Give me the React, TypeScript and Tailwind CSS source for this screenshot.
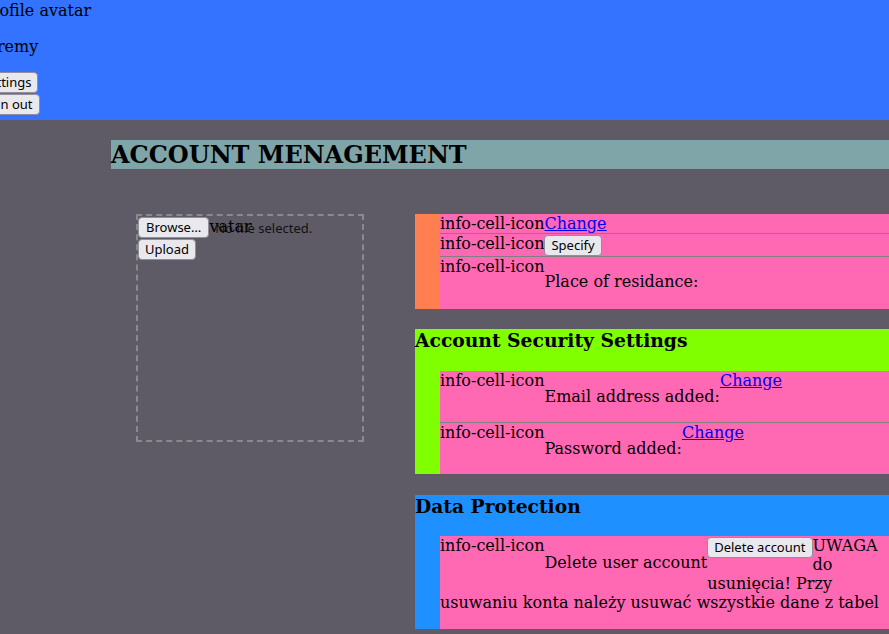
import React from 'react';

const serif = "font-['DejaVu_Serif',serif] leading-[normal]";
const btn =
  "relative bg-[#e9e9ed] border border-[#8f8f9d] rounded-[4px] px-[6px] py-[1px] text-[13px] leading-[17px] text-black font-['Noto_Sans',sans-serif] whitespace-nowrap";

function Icon() {
  return <span className="shrink-0">info-cell-icon</span>;
}

function ChangeLink() {
  return <a href="#" className="text-[#0000ee] underline shrink-0">Change</a>;
}

export default function App() {
  return (
    <div className={`${serif} text-[16px] text-black w-[889px] h-[634px] overflow-hidden bg-[#5e5b66]`}>
      <header className="bg-[#3373ff] h-[120px] pt-[1px]">
        <div className="-ml-[19px]">
          <div>Profile avatar</div>
          <p className="mt-[17px] mb-[15px]">Jeremy</p>
        </div>
        <div className="-ml-[25px] flex flex-col items-start gap-[1px] pt-[1px]">
          <button className={btn}>Settings</button>
          <button className={btn}>Sign out</button>
        </div>
      </header>

      <main className="pt-[20px] pl-[111px]">
        <h1 className="bg-[#7fa5a8] text-[24px] font-bold leading-[29px]">ACCOUNT MENAGEMENT</h1>

        <div className="flex items-start gap-[51px] mt-[45px] pl-[25px]">
          <div className="relative w-[228px] h-[228px] shrink-0 border-2 border-dashed border-[#8a8a8a]">
            <span className="absolute left-[62px] top-[1px]">avatar</span>
            <div className="flex items-center gap-[6px] mt-[1px]">
              <button className={`${btn} px-[7px]`}>Browse…</button>
              <span className="relative text-[13px] font-['Noto_Sans',sans-serif] text-[#111]">No file selected.</span>
            </div>
            <button className={`${btn} mt-[1px] px-[5px]`}>Upload</button>
          </div>

          <div className="flex-1 flex flex-col">
            <section className="bg-[#ff7f50] pl-[25px]">
              <div className="bg-[#ff69b4]">
                <div className="flex items-start border-b border-[#808080]">
                  <Icon />
                  <ChangeLink />
                </div>
                <div className="flex items-start border-b border-[#808080]">
                  <Icon />
                  <button className={`${btn} mt-[1px]`}>Specify</button>
                </div>
                <div className="flex items-start">
                  <Icon />
                  <div className="pt-[15px] pb-[18px]">Place of residance:</div>
                </div>
              </div>
            </section>

            <section className="bg-[#7fff00] mt-[20px]">
              <h3 className="text-[18.72px] font-bold leading-[22px] mb-[20px]">Account Security Settings</h3>
              <div className="ml-[25px] bg-[#ff69b4]">
                <div className="flex items-start border-b border-[#808080]">
                  <Icon />
                  <div className="pt-[16px] pb-[16px]">Email address added:</div>
                  <ChangeLink />
                </div>
                <div className="flex items-start">
                  <Icon />
                  <div className="pt-[16px] pb-[16px]">Password added:</div>
                  <ChangeLink />
                </div>
              </div>
            </section>

            <section className="bg-[#1e90ff] mt-[21px]">
              <h3 className="text-[18.72px] font-bold leading-[22px] mb-[19px]">Data Protection</h3>
              <div className="ml-[25px] bg-[#ff69b4] pb-[17px]">
                <div className="flex items-start">
                  <Icon />
                  <div className="pt-[17px] whitespace-nowrap">Delete user account</div>
                  <div className="flex flex-col">
                    <div className="flex items-start">
                      <button className={`${btn} mt-[1px] px-[5px]`}>Delete account</button>
                      <div>
                        UWAGA
                        <br />
                        do
                      </div>
                    </div>
                    <div>usunięcia! Przy</div>
                  </div>
                </div>
                <div className="whitespace-nowrap">usuwaniu konta należy usuwać wszystkie dane z tabel</div>
              </div>
            </section>
          </div>
        </div>
      </main>
    </div>
  );
}
